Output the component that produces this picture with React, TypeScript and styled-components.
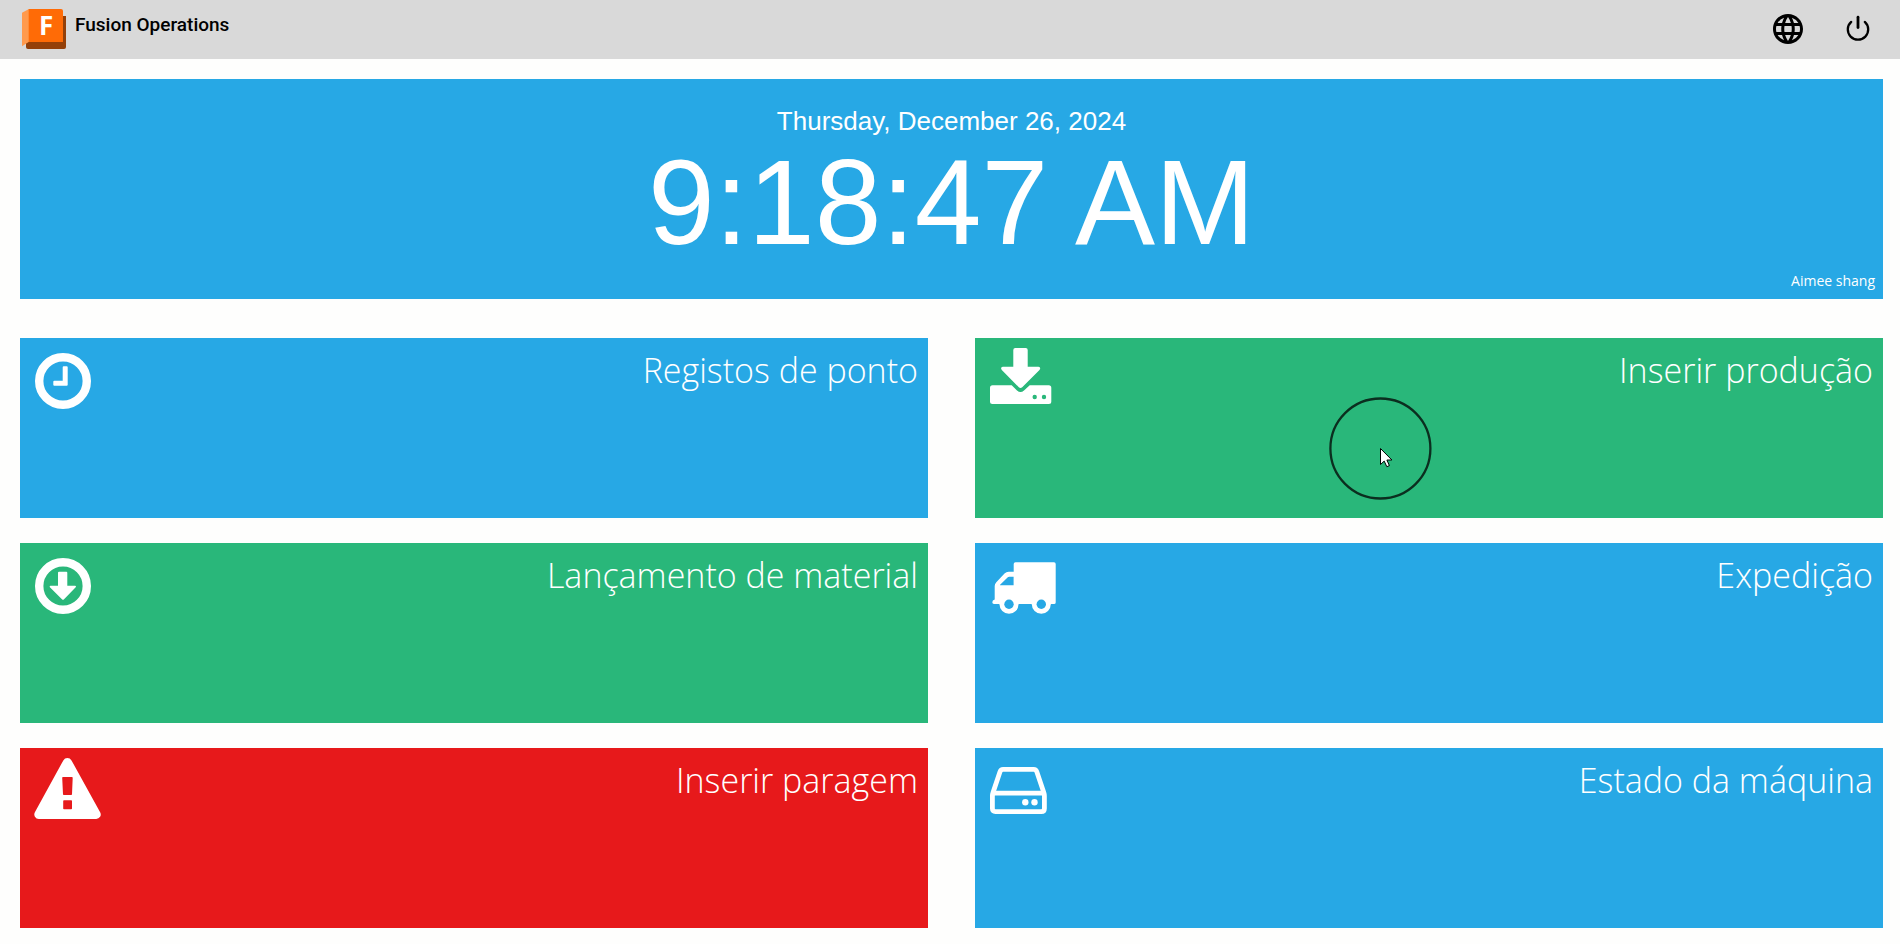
import React from 'react';
import styled, { createGlobalStyle } from 'styled-components';
import { MdLanguage } from 'react-icons/md';

const colors = {
  page: '#fefefd',
  header: '#d9d9d9',
  blue: '#27a8e5',
  green: '#29b77a',
  red: '#e7191b',
};

const GlobalStyle = createGlobalStyle`
  *, *::before, *::after { box-sizing: border-box; }
  body {
    margin: 0;
    background: ${colors.page};
    font-family: 'Open Sans', 'Noto Sans', sans-serif;
  }
`;

const Header = styled.header`
  display: flex;
  align-items: center;
  justify-content: space-between;
  height: 59px;
  padding: 0 27px 2px 20px;
  background: ${colors.header};
  color: #000;
`;

const Brand = styled.a`
  display: flex;
  align-items: center;
  gap: 7px;
  color: inherit;
  text-decoration: none;
`;

const BrandName = styled.span`
  padding-bottom: 8px;
  font-family: Roboto, sans-serif;
  font-size: 19px;
  font-weight: 500;
  line-height: 24px;
`;

const Actions = styled.div`
  display: flex;
  align-items: center;
  gap: 37px;
`;

const IconButton = styled.button`
  display: flex;
  padding: 0;
  border: 0;
  background: none;
  color: #000;
  cursor: pointer;
`;

const Main = styled.main`
  display: flex;
  flex-direction: column;
  gap: 39px;
  padding: 20px 17px 16px 20px;
`;

const Banner = styled.section`
  display: flex;
  flex-direction: column;
  align-items: center;
  min-height: 220px;
  padding: 27px 8px 8px;
  background: ${colors.blue};
  color: #fff;
`;

const DateLine = styled.p`
  margin: 0;
  font-family: 'Liberation Sans', Arial, sans-serif;
  font-size: 26px;
  line-height: 30px;
`;

const Clock = styled.time`
  font-family: 'Liberation Sans', Arial, sans-serif;
  font-size: 120px;
  line-height: 132px;
`;

const UserName = styled.span`
  align-self: flex-end;
  margin-top: auto;
  font-size: 14px;
  line-height: 20px;
`;

const TileGrid = styled.nav`
  display: grid;
  grid-template-columns: repeat(2, minmax(0, 1fr));
  gap: 25px 47px;
`;

const Tile = styled.button<{ $tone: string }>`
  position: relative;
  display: flex;
  align-items: flex-start;
  justify-content: space-between;
  min-height: 180px;
  padding: 8px 10px 8px 12px;
  border: 0;
  background: ${(p) => p.$tone};
  color: #fff;
  font-family: inherit;
  cursor: pointer;
`;

const TileTitle = styled.span`
  font-size: 34px;
  font-weight: 300;
  line-height: 48px;
`;

const TileIcon = styled.svg`
  flex: none;
  width: 72px;
  height: 64px;
  fill: currentColor;
`;

const PointerMark = styled.svg`
  position: absolute;
  top: 58px;
  left: 353px;
  width: 104px;
  height: 104px;
`;

const Logo = () => (
  <svg width="48" height="42" viewBox="20 8 48 42" aria-hidden="true">
    <path d="M26 43l37-27h3v31q0 2-2 2H28q-2 0-2-2z" fill="#944009" />
    <path d="M22 12.7L29 9v32.7l-7 4.6z" fill="#ff9a4d" />
    <path d="M28.7 9H61q2 0 2 2v31H28.7z" fill="#ff6b06" />
    <text x="39" y="34.5" fill="#fff" fontFamily="Open Sans, sans-serif" fontSize="26" fontWeight="700">
      F
    </text>
  </svg>
);

const PowerIcon = () => (
  <svg width="30" height="30" viewBox="0 0 30 30" fill="none" stroke="currentColor" strokeLinecap="round" aria-hidden="true">
    <path d="M8.2 7.9a10.2 10.2 0 1 0 13.6 0" strokeWidth="2.3" />
    <path d="M15 3.2v10.4" strokeWidth="2.8" />
  </svg>
);

const ClockIcon = () => (
  <TileIcon viewBox="0 0 72 64" aria-hidden="true">
    <circle cx="31" cy="35" r="23.8" fill="none" stroke="currentColor" strokeWidth="8.4" />
    <path d="M31.7 20.3h3q1 0 1 1v17.4q0 1-1 1H22.3q-1 0-1-1v-3q0-1 1-1h8.4V21.3q0-1 1-1z" />
  </TileIcon>
);

const DownloadIcon = () => (
  <TileIcon viewBox="0 0 72 64" aria-hidden="true">
    <path d="M28.3 2h10.4q2 0 2 2v16.7h10.8q2.8 0.6 1 3.3L35.2 41.2q-1.7 1.4-3.4 0L14.8 24q-1.8-2.7 1-3.3h10.5V4q0-2 2-2z" />
    <path
      fillRule="evenodd"
      d="M5.5 39.3H24.7L30 44.6q3.5 3 7 0l5.7-5.3H61.8q2.5 0 2.5 2.5V55.5q0 2.5-2.5 2.5H5.5Q3 58 3 55.5V41.8q0-2.5 2.5-2.5zM47.7 48.8a2.2 2.2 0 1 0 0 4.4 2.2 2.2 0 1 0 0-4.4zM57 48.8a2.2 2.2 0 1 0 0 4.4 2.2 2.2 0 1 0 0-4.4z"
    />
  </TileIcon>
);

const ArrowCircleIcon = () => (
  <TileIcon viewBox="0 0 72 64" aria-hidden="true">
    <circle cx="31" cy="35" r="23.8" fill="none" stroke="currentColor" strokeWidth="8.4" />
    <path d="M27 20.7h7.3q1 0 1 1v13h7.9q1.4.3.5 1.5L31.8 48.5q-.8.7-1.6 0L17.9 36.2q-.8-1.2.5-1.5H26v-13q0-1 1-1z" />
  </TileIcon>
);

const TruckIcon = () => (
  <TileIcon viewBox="0 0 72 64" aria-hidden="true">
    <path
      fillRule="evenodd"
      d="M28.5 11.3H67q1.7 0 1.7 1.7V51.5q0 1.5-1.7 1.5H7Q5.3 53 5.3 51.2 5.3 49.2 7.7 48.5V35q0-2 1.4-3.6L17.5 22.6q1.8-1.9 4.2-1.9h5V13q0-1.7 1.8-1.7zM26.6 25.7h-4.4q-.8 0-1.4.6L13.1 33.7q-.4.6.3.6H26.6z"
    />
    <circle cx="22" cy="53.3" r="9.5" />
    <circle cx="54.3" cy="53.3" r="9.5" />
    <circle cx="22" cy="53.3" r="4.7" fill={colors.blue} />
    <circle cx="54.3" cy="53.3" r="4.7" fill={colors.blue} />
  </TileIcon>
);

const WarningIcon = () => (
  <TileIcon viewBox="0 0 72 64" aria-hidden="true">
    <path
      fillRule="evenodd"
      d="M31.3 4.4Q32.7 2 35.4 2t4.1 2.4L68 56.1q1.5 2.6.1 4.7T64.2 63H6.8q-2.6 0-3.9-2.2t.1-4.7zM31 21q-.8 0-.8.8L31 38.2q0 .8.8.8h7.4q.8 0 .8-.8l.7-16.4q0-.8-.8-.8zM32 44.3q-.8 0-.8.8v7.4q0 .8.8.8h7.2q.8 0 .8-.8v-7.4q0-.8-.8-.8z"
    />
  </TileIcon>
);

const DriveIcon = () => (
  <TileIcon viewBox="0 0 72 64" aria-hidden="true">
    <g fill="none" stroke="currentColor" strokeWidth="4.8" strokeLinejoin="round">
      <path d="M5.4 40q0-1.7.6-3.4L13 15.7q.8-2.3 3.1-2.3H46.7q2.3 0 3.1 2.3l7 20.9q.6 1.7.6 3.4V52.5q0 3.1-3.1 3.1H8.5q-3.1 0-3.1-3.1z" />
      <path d="M6 37.2H57" />
    </g>
    <circle cx="38.3" cy="46.3" r="3.2" />
    <circle cx="47.5" cy="46.3" r="3.2" />
  </TileIcon>
);

const Pointer = () => (
  <PointerMark viewBox="0 0 104 104" aria-hidden="true">
    <circle cx="52.4" cy="52.5" r="50" fill="none" stroke="#0b2e1f" strokeWidth="2.3" />
    <path d="M52.5 52.5v16l3.7-3.4 2.6 5.6 2.6-1.1-2.5-5.6h5z" fill="#fff" stroke="#000" strokeWidth="1" />
  </PointerMark>
);

const tiles = [
  { title: 'Registos de ponto', tone: colors.blue, Icon: ClockIcon },
  { title: 'Inserir produção', tone: colors.green, Icon: DownloadIcon, pointed: true },
  { title: 'Lançamento de material', tone: colors.green, Icon: ArrowCircleIcon },
  { title: 'Expedição', tone: colors.blue, Icon: TruckIcon },
  { title: 'Inserir paragem', tone: colors.red, Icon: WarningIcon },
  { title: 'Estado da máquina', tone: colors.blue, Icon: DriveIcon },
];

export default function App() {
  return (
    <>
      <GlobalStyle />
      <Header>
        <Brand href="#">
          <Logo />
          <BrandName>Fusion Operations</BrandName>
        </Brand>
        <Actions>
          <IconButton type="button" aria-label="Idioma">
            <MdLanguage size={36} />
          </IconButton>
          <IconButton type="button" aria-label="Sair">
            <PowerIcon />
          </IconButton>
        </Actions>
      </Header>
      <Main>
        <Banner>
          <DateLine>Thursday, December 26, 2024</DateLine>
          <Clock dateTime="2024-12-26T09:18:47">9:18:47 AM</Clock>
          <UserName>Aimee shang</UserName>
        </Banner>
        <TileGrid>
          {tiles.map(({ title, tone, Icon, pointed }) => (
            <Tile key={title} type="button" $tone={tone}>
              <Icon />
              <TileTitle>{title}</TileTitle>
              {pointed && <Pointer />}
            </Tile>
          ))}
        </TileGrid>
      </Main>
    </>
  );
}
